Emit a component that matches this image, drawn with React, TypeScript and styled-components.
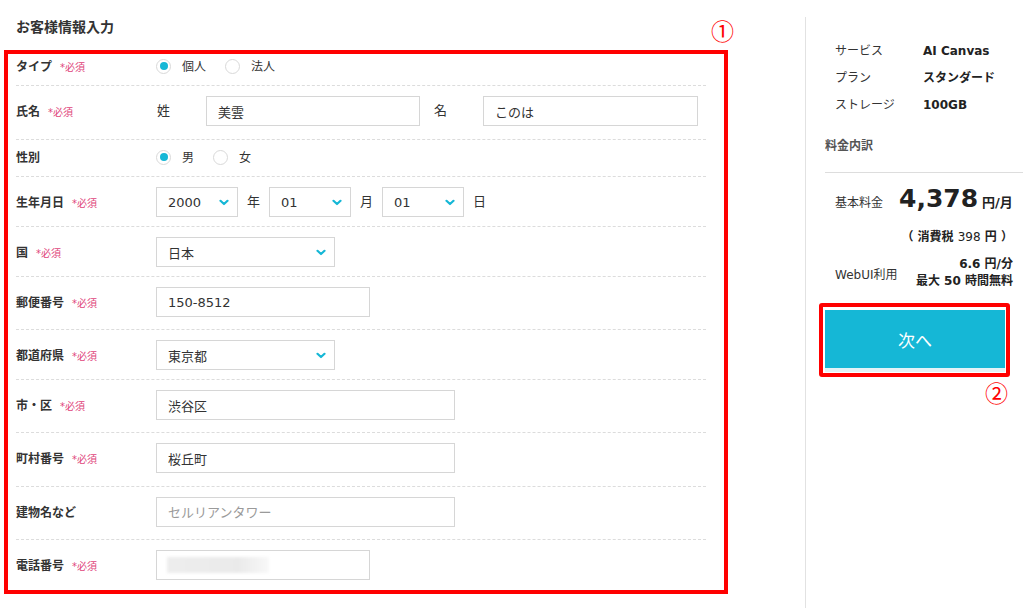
import React from "react";
import styled, { createGlobalStyle } from "styled-components";

const GlobalStyle = createGlobalStyle`
  html, body { margin: 0; padding: 0; background: #fff; }
  body {
    font-family: "DejaVu Sans", "Noto Sans CJK JP", sans-serif;
    color: #333;
  }
  * { box-sizing: border-box; }
`;

const CYAN = "#15b7d6";
const RED = "#ff0000";

const Page = styled.div`
  display: flex;
  width: 1033px;
  height: 608px;
  overflow: hidden;
`;

const LeftCol = styled.div`
  position: relative;
  width: 728px;
  flex: none;
`;

const Title = styled.h1`
  margin: 0;
  height: 50px;
  padding: 18px 0 0 16px;
  font-size: 14px;
  line-height: 18px;
  font-weight: 700;
  color: #333;
`;

const Marker = styled.span<{ $top: number; $left: number }>`
  position: absolute;
  top: ${(p) => p.$top}px;
  left: ${(p) => p.$left}px;
  font-family: "Noto Sans CJK JP", sans-serif;
  font-size: 23px;
  line-height: 1;
  color: ${RED};
`;

const FormBox = styled.div`
  margin-left: 4px;
  width: 724px;
  height: 544px;
  border: 4px solid ${RED};
  padding: 0 18px 0 8px;
  display: flex;
  flex-direction: column;
`;

const Row = styled.div<{ $pt: number; $pb: number }>`
  display: grid;
  grid-template-columns: 140px 1fr;
  align-items: center;
  padding: ${(p) => p.$pt}px 0 ${(p) => p.$pb}px;
  border-bottom: 1px dashed #dcdcdc;
  &:last-child {
    border-bottom: none;
  }
`;

const Label = styled.div`
  display: flex;
  align-items: center;
  gap: 8px;
  height: 20px;
  padding-top: 3px;
`;

const LabelText = styled.span`
  font-size: 12px;
  line-height: 17px;
  font-weight: 700;
  color: #333;
`;

const Req = styled.span`
  font-size: 10px;
  line-height: 17px;
  color: #e0457b;
`;

const Controls = styled.div<{ $gap?: number }>`
  display: flex;
  align-items: center;
  gap: ${(p) => p.$gap ?? 0}px;
`;

const RadioGroup = styled.div`
  display: flex;
  align-items: center;
  gap: 19px;
`;

const RadioItem = styled.label`
  display: flex;
  align-items: center;
  gap: 11px;
  height: 20px;
  font-size: 12px;
  color: #333;
`;

const RadioText = styled.span`
  height: 20px;
  padding-top: 2px;
  line-height: 18px;
`;

const RadioCircle = styled.span<{ $on?: boolean }>`
  width: 15px;
  height: 15px;
  border-radius: 50%;
  border: 1px solid #d9d9d9;
  background: #fff;
  display: flex;
  align-items: center;
  justify-content: center;
  &::after {
    content: "";
    width: 8px;
    height: 8px;
    border-radius: 50%;
    background: ${(p) => (p.$on ? CYAN : "transparent")};
  }
`;

const SubLabel = styled.span<{ $ml?: number }>`
  width: 50px;
  margin-left: ${(p) => p.$ml ?? 0}px;
  font-size: 13px;
  line-height: 20px;
  color: #333;
  padding-left: 1px;
`;

const Input = styled.input<{ $w: number }>`
  width: ${(p) => p.$w}px;
  height: 30px;
  border: 1px solid #d6d6d6;
  border-radius: 0;
  padding: 0 11px;
  font-family: "DejaVu Sans", "Noto Sans CJK JP", sans-serif;
  font-size: 13px;
  color: #333;
  background: #fff;
  outline: none;
  &::placeholder {
    color: #9a9a9a;
  }
`;

const FieldBox = styled.div<{ $w: number }>`
  width: ${(p) => p.$w}px;
  height: 30px;
  border: 1px solid #d6d6d6;
  padding: 0 10px;
  display: flex;
  align-items: center;
`;

const Blur = styled.span`
  width: 102px;
  height: 16px;
  background: linear-gradient(90deg, #ededed 0%, #eaeaea 70%, #f8f8f8 100%);
  filter: blur(1.5px);
`;

const SelectBox = styled.div<{ $w: number }>`
  width: ${(p) => p.$w}px;
  height: 30px;
  border: 1px solid #d6d6d6;
  padding: 0 8px 0 11px;
  display: flex;
  align-items: center;
  justify-content: space-between;
  font-size: 13px;
  color: #333;
  background: #fff;
`;

const UnitText = styled.span`
  font-size: 13px;
  line-height: 20px;
  color: #333;
`;

const Chevron = () => (
  <svg width="10" height="7" viewBox="0 0 10 7" aria-hidden>
    <polyline
      points="1.5,1.8 5,5 8.5,1.8"
      fill="none"
      stroke={CYAN}
      strokeWidth="2.2"
      strokeLinecap="round"
      strokeLinejoin="round"
    />
  </svg>
);

const Select = ({ w, value }: { w: number; value: string }) => (
  <SelectBox $w={w}>
    <span>{value}</span>
    <Chevron />
  </SelectBox>
);

const Spacer = styled.div`
  width: 77px;
  flex: none;
`;

const Panel = styled.aside`
  width: 228px;
  flex: none;
  margin-top: 17px;
  border-left: 1px solid #e2e2e2;
  padding: 0 10px 0 19px;
`;

const Summary = styled.dl`
  margin: 21px 0 0;
  padding-left: 10px;
  display: grid;
  grid-template-columns: 88px 1fr;
  font-size: 12px;
  line-height: 27px;
  color: #333;
  dt, dd { margin: 0; }
  dd { font-weight: 700; color: #222; }
`;

const BreakdownTitle = styled.div`
  margin-top: 18px;
  font-size: 12px;
  line-height: 18px;
  font-weight: 700;
  color: #555;
`;

const Divider = styled.hr`
  margin: 17px 0 0;
  border: none;
  border-top: 1px solid #dddddd;
`;

const PriceRow = styled.div`
  margin-top: 8px;
  padding-left: 10px;
  display: flex;
  align-items: baseline;
  height: 36px;
`;

const PriceLabel = styled.span`
  width: 64px;
  font-size: 12px;
  color: #333;
`;

const Price = styled.span`
  font-size: 25px;
  line-height: 36px;
  font-weight: 700;
  color: #222;
`;

const PriceUnit = styled.span`
  margin-left: 4px;
  font-size: 13px;
  font-weight: 700;
  color: #222;
`;

const Tax = styled.div`
  margin-top: 11px;
  padding-right: 10px;
  text-align: right;
  font-size: 12px;
  line-height: 18px;
  font-weight: 700;
  color: #222;
  span { font-weight: 400; }
`;

const UsageRow = styled.div`
  margin-top: 10px;
  padding: 0 10px;
  display: flex;
  align-items: center;
  justify-content: space-between;
`;

const UsageLabel = styled.span`
  font-size: 12px;
  color: #333;
  padding-top: 1px;
`;

const UsageValue = styled.div`
  text-align: right;
  font-size: 12px;
  line-height: 17px;
  font-weight: 700;
  color: #222;
`;

const ButtonWrap = styled.div`
  position: relative;
  margin-top: 20px;
  width: 180px;
`;

const NextButton = styled.button`
  display: block;
  width: 180px;
  height: 58px;
  border: none;
  background: ${CYAN};
  color: #fff;
  font-family: "Noto Sans CJK JP", sans-serif;
  font-size: 17px;
  box-shadow: 0 4px 0 #e3f3f7;
  cursor: pointer;
`;

const Highlight = styled.span`
  position: absolute;
  top: -7px;
  left: -6px;
  right: -5px;
  bottom: -9px;
  border: 4px solid ${RED};
  border-radius: 3px;
  pointer-events: none;
`;

const ButtonMarker = styled.span`
  position: absolute;
  top: 71px;
  right: -3px;
  font-family: "Noto Sans CJK JP", sans-serif;
  font-size: 23px;
  line-height: 1;
  color: ${RED};
`;

const Field = ({
  label,
  req,
  pt,
  pb,
  children,
}: {
  label: string;
  req?: boolean;
  pt: number;
  pb: number;
  children: React.ReactNode;
}) => (
  <Row $pt={pt} $pb={pb}>
    <Label>
      <LabelText>{label}</LabelText>
      {req && <Req>*必須</Req>}
    </Label>
    {children}
  </Row>
);

const Radio = ({ on, text }: { on?: boolean; text: string }) => (
  <RadioItem>
    <RadioCircle $on={on} />
    <RadioText>{text}</RadioText>
  </RadioItem>
);

export default function App() {
  return (
    <>
      <GlobalStyle />
      <Page>
        <LeftCol>
          <Title>お客様情報入力</Title>
          <Marker $top={19} $left={711}>①</Marker>
          <FormBox>
            <Field label="タイプ" req pt={2} pb={9}>
              <RadioGroup>
                <Radio on text="個人" />
                <Radio text="法人" />
              </RadioGroup>
            </Field>
            <Field label="氏名" req pt={10} pb={13}>
              <Controls>
                <SubLabel>姓</SubLabel>
                <Input $w={214} value="美雲" readOnly />
                <SubLabel $ml={13}>名</SubLabel>
                <Input $w={215} value="このは" readOnly />
              </Controls>
            </Field>
            <Field label="性別" pt={7} pb={9}>
              <RadioGroup>
                <Radio on text="男" />
                <Radio text="女" />
              </RadioGroup>
            </Field>
            <Field label="生年月日" req pt={10} pb={9}>
              <Controls $gap={9}>
                <Select w={82} value="2000" />
                <UnitText>年</UnitText>
                <Select w={82} value="01" />
                <UnitText>月</UnitText>
                <Select w={82} value="01" />
                <UnitText>日</UnitText>
              </Controls>
            </Field>
            <Field label="国" req pt={10} pb={9}>
              <Controls>
                <Select w={179} value="日本" />
              </Controls>
            </Field>
            <Field label="郵便番号" req pt={10} pb={12}>
              <Controls>
                <Input $w={214} value="150-8512" readOnly />
              </Controls>
            </Field>
            <Field label="都道府県" req pt={10} pb={9}>
              <Controls>
                <Select w={179} value="東京都" />
              </Controls>
            </Field>
            <Field label="市・区" req pt={10} pb={12}>
              <Controls>
                <Input $w={299} value="渋谷区" readOnly />
              </Controls>
            </Field>
            <Field label="町村番号" req pt={10} pb={13}>
              <Controls>
                <Input $w={299} value="桜丘町" readOnly />
              </Controls>
            </Field>
            <Field label="建物名など" pt={10} pb={12}>
              <Controls>
                <Input $w={299} placeholder="セルリアンタワー" readOnly />
              </Controls>
            </Field>
            <Field label="電話番号" req pt={10} pb={10}>
              <Controls>
                <FieldBox $w={214}>
                  <Blur />
                </FieldBox>
              </Controls>
            </Field>
          </FormBox>
        </LeftCol>
        <Spacer />
        <Panel>
          <Summary>
            <dt>サービス</dt>
            <dd>AI Canvas</dd>
            <dt>プラン</dt>
            <dd>スタンダード</dd>
            <dt>ストレージ</dt>
            <dd>100GB</dd>
          </Summary>
          <BreakdownTitle>料金内訳</BreakdownTitle>
          <Divider />
          <PriceRow>
            <PriceLabel>基本料金</PriceLabel>
            <Price>4,378</Price>
            <PriceUnit>円/月</PriceUnit>
          </PriceRow>
          <Tax>
            （ 消費税 <span>398</span> 円 ）
          </Tax>
          <UsageRow>
            <UsageLabel>WebUI利用</UsageLabel>
            <UsageValue>
              <div>6.6 円/分</div>
              <div>最大 50 時間無料</div>
            </UsageValue>
          </UsageRow>
          <ButtonWrap>
            <NextButton>次へ</NextButton>
            <Highlight />
            <ButtonMarker>②</ButtonMarker>
          </ButtonWrap>
        </Panel>
      </Page>
    </>
  );
}
